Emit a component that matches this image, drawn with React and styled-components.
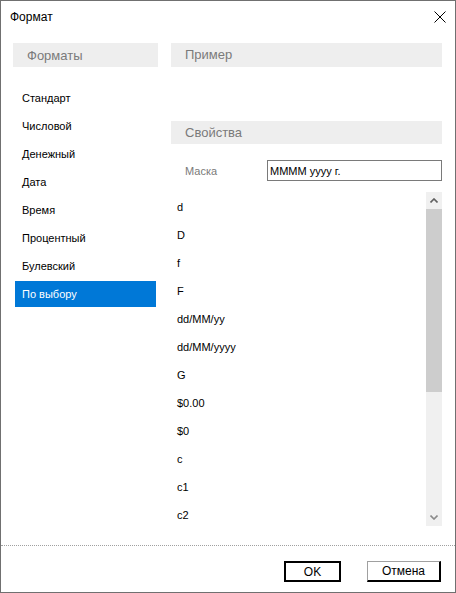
import React from 'react';
import styled, { createGlobalStyle } from 'styled-components';

const GlobalStyle = createGlobalStyle`
  html, body {
    margin: 0;
    padding: 0;
    background: #ffffff;
  }
  body {
    font-family: "Liberation Sans", Arial, sans-serif;
  }
`

const Window = styled.div`
  box-sizing: border-box;
  width: 456px;
  height: 593px;
  border: 1px solid #707070;
  background: #ffffff;
  display: flex;
  flex-direction: column;
  font-family: "Liberation Sans", Arial, sans-serif;
`

const TitleBar = styled.div`
  height: 31px;
  display: flex;
  align-items: center;
  justify-content: space-between;
  padding: 0 9px 0 9px;
`

const Title = styled.span`
  font-size: 12px;
  color: #000000;
`

const CloseButton = styled.div`
  width: 12px;
  height: 12px;
  display: flex;
`

const Body = styled.div`
  flex: 1;
  display: flex;
  gap: 13px;
  padding: 11px 13px 0 12px;
  min-height: 0;
`

const LeftColumn = styled.div`
  width: 145px;
  display: flex;
  flex-direction: column;
`

const RightColumn = styled.div`
  width: 271px;
  display: flex;
  flex-direction: column;
`

const SectionHeader = styled.div`
  height: 24px;
  background: #eeeeee;
  color: #7a7a7a;
  font-size: 13px;
  display: flex;
  align-items: center;
  padding-left: 14px;
  margin-bottom: ${p => p.gap || 0}px;
`

const FormatList = styled.div`
  display: flex;
  flex-direction: column;
`

const FormatItem = styled.div`
  height: 26px;
  margin: 1px 2px;
  display: flex;
  align-items: center;
  padding-left: 7px;
  font-size: 11px;
  color: ${p => (p.selected ? '#ffffff' : '#000000')};
  background: ${p => (p.selected ? '#0078d7' : 'transparent')};
`

const MaskRow = styled.div`
  display: flex;
  align-items: center;
  height: 21px;
  margin-bottom: 11px;
`

const MaskLabel = styled.span`
  width: 82px;
  padding-left: 14px;
  font-size: 11px;
  color: #7a7a7a;
`

const MaskInput = styled.div`
  box-sizing: border-box;
  flex: 1;
  height: 21px;
  border: 1px solid #7a7a7a;
  font-size: 11px;
  color: #000000;
  display: flex;
  align-items: center;
  padding-left: 2px;
`

const PatternBox = styled.div`
  display: flex;
  height: 334px;
`

const PatternItems = styled.div`
  flex: 1;
  overflow: hidden;
  display: flex;
  flex-direction: column;
  padding-top: 1px;
`

const PatternItem = styled.div`
  flex: 0 0 28px;
  display: flex;
  align-items: center;
  padding-left: 6px;
  font-size: 11px;
  color: #000000;
`

const ScrollBar = styled.div`
  width: 16px;
  display: flex;
  flex-direction: column;
  background: #f0f0f0;
`

const ScrollArrow = styled.div`
  height: 17px;
  display: flex;
  align-items: center;
  justify-content: center;
  color: ${p => (p.dim ? '#8a8a8a' : '#606060')};
`

const ScrollThumb = styled.div`
  height: 183px;
  background: #cdcdcd;
`

const ScrollTrack = styled.div`
  flex: 1;
`

const Separator = styled.div`
  border-top: 1px dotted #a0a0a0;
  margin-top: 19px;
`

const Footer = styled.div`
  display: flex;
  justify-content: flex-end;
  gap: 26px;
  padding: 15px 14px 10px 0;
`

const DialogButton = styled.button`
  box-sizing: border-box;
  width: ${p => p.w}px;
  height: 21px;
  background: #ffffff;
  font-family: "Liberation Sans", Arial, sans-serif;
  font-size: 12px;
  color: #000000;
  padding: 0;
  border-style: solid;
  border-width: ${p => (p.primary ? '2px' : '1px 2px 2px 1px')};
  border-color: ${p => (p.primary ? '#000000' : '#a0a0a0 #000000 #000000 #a0a0a0')};
`

const formats = ['Стандарт', 'Числовой', 'Денежный', 'Дата', 'Время', 'Процентный', 'Булевский', 'По выбору']
const patterns = ['d', 'D', 'f', 'F', 'dd/MM/yy', 'dd/MM/yyyy', 'G', '$0.00', '$0', 'c', 'c1', 'c2']

const Chevron = ({ down }) => (
  <svg width="8" height="5" viewBox="0 0 8 5">
    <path d={down ? 'M0.5 0.5 L4 4 L7.5 0.5' : 'M0.5 4.5 L4 1 L7.5 4.5'} fill="none" stroke="currentColor" strokeWidth="1.6" />
  </svg>
)

export default function App() {
  return (
    <Window>
      <GlobalStyle />
      <TitleBar>
        <Title>Формат</Title>
        <CloseButton>
          <svg width="12" height="12" viewBox="0 0 12 12">
            <path d="M0.5 0.5 L11.5 11.5 M11.5 0.5 L0.5 11.5" stroke="#000000" strokeWidth="1" />
          </svg>
        </CloseButton>
      </TitleBar>
      <Body>
        <LeftColumn>
          <SectionHeader gap={17}>Форматы</SectionHeader>
          <FormatList>
            {formats.map(f => (
              <FormatItem key={f} selected={f === 'По выбору'}>{f}</FormatItem>
            ))}
          </FormatList>
        </LeftColumn>
        <RightColumn>
          <SectionHeader gap={54}>Пример</SectionHeader>
          <SectionHeader gap={16}>Свойства</SectionHeader>
          <MaskRow>
            <MaskLabel>Маска</MaskLabel>
            <MaskInput>MMMM yyyy г.</MaskInput>
          </MaskRow>
          <PatternBox>
            <PatternItems>
              {patterns.map(p => (
                <PatternItem key={p}>{p}</PatternItem>
              ))}
            </PatternItems>
            <ScrollBar>
              <ScrollArrow><Chevron /></ScrollArrow>
              <ScrollThumb />
              <ScrollTrack />
              <ScrollArrow dim><Chevron down /></ScrollArrow>
            </ScrollBar>
          </PatternBox>
        </RightColumn>
      </Body>
      <Separator />
      <Footer>
        <DialogButton primary w={57}>OK</DialogButton>
        <DialogButton w={74}>Отмена</DialogButton>
      </Footer>
    </Window>
  )
}
